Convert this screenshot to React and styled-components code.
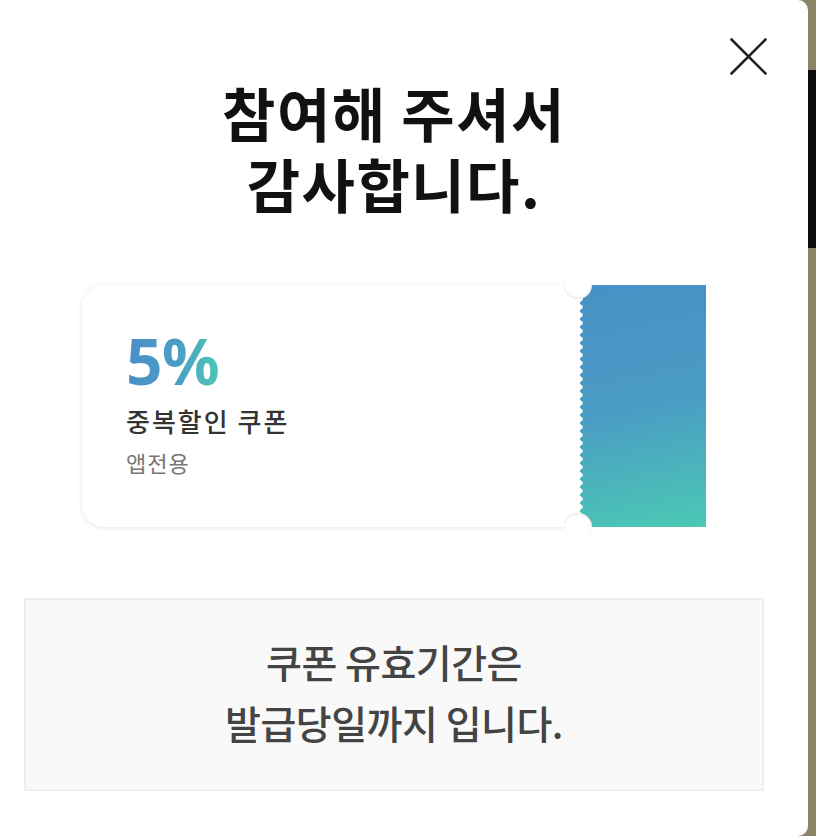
import React from "react";
import styled, { createGlobalStyle } from "styled-components";

const GlobalStyle = createGlobalStyle`
  html, body {
    margin: 0;
    padding: 0;
  }
  body {
    width: 816px;
    height: 836px;
    overflow: hidden;
    background: linear-gradient(
      to bottom,
      #8b8567 0,
      #8b8567 70px,
      #0c0c0c 70px,
      #0c0c0c 248px,
      #8b8567 248px
    );
    font-family: "Noto Sans CJK KR", "Noto Sans", sans-serif;
  }
`;

const Panel = styled.div`
  width: 808px;
  height: 836px;
  background: #ffffff;
  border-radius: 0 10px 10px 0;
  display: flex;
  flex-direction: column;
  box-sizing: border-box;
`;

const TopBar = styled.div`
  display: flex;
  justify-content: flex-end;
  padding: 38px 41px 0 0;
`;

const CloseButton = styled.button`
  width: 37px;
  height: 37px;
  padding: 0;
  border: none;
  background: transparent;
  cursor: pointer;
  display: flex;
`;

const Content = styled.div`
  width: 740px;
  margin-left: 24px;
  display: flex;
  flex-direction: column;
  align-items: center;
`;

const Title = styled.h1`
  margin: 2px 0 0;
  font-size: 58px;
  line-height: 71px;
  font-weight: 700;
  color: #111111;
  text-align: center;
  letter-spacing: 1.5px;
`;

const Ticket = styled.div`
  margin-top: 66px;
  width: 624px;
  height: 242px;
  display: flex;
  position: relative;
`;

const TicketBody = styled.div`
  flex: 1;
  background: #ffffff;
  border-radius: 22px 0 0 22px;
  box-shadow: 0 1px 5px rgba(0, 0, 0, 0.11);
  padding: 44px 0 0 44px;
  box-sizing: border-box;
`;

const Percent = styled.div`
  display: inline-block;
  font-family: "Noto Sans", Roboto, sans-serif;
  font-size: 64px;
  line-height: 64px;
  font-weight: 700;
  letter-spacing: -0.5px;
  background: linear-gradient(90deg, #4a8ec8 0%, #4a9ec6 55%, #4dc6b5 100%);
  -webkit-background-clip: text;
  background-clip: text;
  color: transparent;
`;

const CouponName = styled.div`
  margin-top: 11px;
  font-size: 26px;
  line-height: 34px;
  font-weight: 500;
  color: #333333;
  letter-spacing: 2px;
`;

const CouponNote = styled.div`
  margin-top: 10px;
  font-size: 22px;
  line-height: 28px;
  color: #777777;
  letter-spacing: 1px;
`;

const Stub = styled.div`
  width: 126px;
  position: relative;
  background: linear-gradient(168deg, #4890c6 0%, #4a9cc4 50%, #4bc9b4 100%);

  &::before {
    content: "";
    position: absolute;
    left: -3px;
    top: 10px;
    bottom: 10px;
    width: 6px;
    background: radial-gradient(circle at 3px 4px, #ffffff 2.4px, transparent 3px) repeat-y;
    background-size: 6px 8px;
  }
`;

const Notch = styled.span`
  position: absolute;
  left: -16px;
  ${(p) => (p.$bottom ? "bottom: -14px;" : "top: -14px;")}
  width: 28px;
  height: 28px;
  border-radius: 50%;
  background: #ffffff;
  box-shadow: ${(p) =>
    p.$bottom
      ? "inset 0 1px 2px rgba(0, 0, 0, 0.12)"
      : "inset 0 -1px 2px rgba(0, 0, 0, 0.12)"};
`;

const InfoBox = styled.div`
  margin-top: 71px;
  width: 740px;
  height: 193px;
  box-sizing: border-box;
  padding-bottom: 6px;
  background: #f9f9f9;
  border: 2px solid #eeeeee;
  display: flex;
  align-items: center;
  justify-content: center;
`;

const InfoText = styled.p`
  margin: 0;
  font-size: 39px;
  line-height: 61px;
  font-weight: 500;
  color: #444444;
  text-align: center;
  letter-spacing: -0.5px;
`;

export default function App() {
  return (
    <>
      <GlobalStyle />
      <Panel>
        <TopBar>
          <CloseButton aria-label="닫기">
            <svg width="37" height="37" viewBox="0 0 37 37">
              <path
                d="M1.5 1.5 L35.5 35.5 M35.5 1.5 L1.5 35.5"
                stroke="#222222"
                strokeWidth="2.6"
                strokeLinecap="round"
              />
            </svg>
          </CloseButton>
        </TopBar>
        <Content>
          <Title>
            참여해 주셔서
            <br />
            감사합니다.
          </Title>
          <Ticket>
            <TicketBody>
              <Percent>5%</Percent>
              <CouponName>중복할인 쿠폰</CouponName>
              <CouponNote>앱전용</CouponNote>
            </TicketBody>
            <Stub>
              <Notch />
              <Notch $bottom />
            </Stub>
          </Ticket>
          <InfoBox>
            <InfoText>
              쿠폰 유효기간은
              <br />
              발급당일까지 입니다.
            </InfoText>
          </InfoBox>
        </Content>
      </Panel>
    </>
  );
}
